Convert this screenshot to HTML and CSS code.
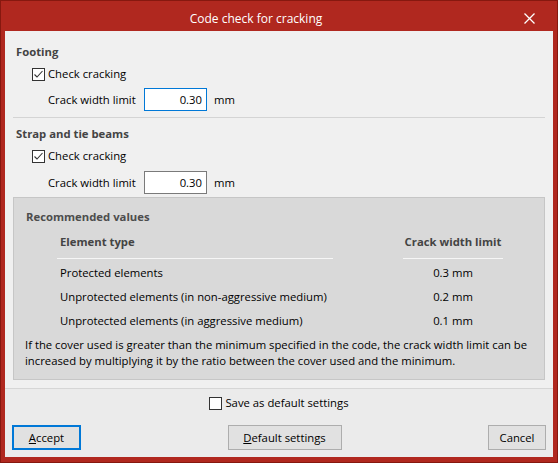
FILE: index.html
```html
<!DOCTYPE html>
<html>
<head>
<meta charset="utf-8">
<link rel="stylesheet" href="styles.css">
</head>
<body>
<div class="window">
  <div class="titlebar">
    <div class="title">Code check for cracking</div>
    <div class="close">
      <svg width="11" height="11" viewBox="0 0 11 11"><path d="M0.5 0.5 L10.5 10.5 M10.5 0.5 L0.5 10.5" stroke="#fff" stroke-width="1.3" fill="none"/></svg>
    </div>
  </div>
  <div class="body">
    <div class="main">
      <div class="group group-first">
        <div class="heading">Footing</div>
        <div class="check-row">
          <span class="box"><svg width="11" height="11" viewBox="0 0 11 11"><path d="M1.5 5.5 L4 8 L9.5 2" stroke="#333" stroke-width="1.1" fill="none"/></svg></span>
          <span>Check cracking</span>
        </div>
        <div class="limit-row">
          <span class="limit-label">Crack width limit</span>
          <span class="input input-focus">0.30</span>
          <span class="unit">mm</span>
        </div>
      </div>
      <div class="sep"></div>
      <div class="group group-second">
        <div class="heading">Strap and tie beams</div>
        <div class="check-row">
          <span class="box"><svg width="11" height="11" viewBox="0 0 11 11"><path d="M1.5 5.5 L4 8 L9.5 2" stroke="#333" stroke-width="1.1" fill="none"/></svg></span>
          <span>Check cracking</span>
        </div>
        <div class="limit-row">
          <span class="limit-label">Crack width limit</span>
          <span class="input">0.30</span>
          <span class="unit">mm</span>
        </div>
      </div>
      <div class="recommend">
        <div class="rec-title">Recommended values</div>
        <div class="rec-table">
          <div class="rec-head">
            <div class="col-type head-cell">Element type</div>
            <div class="col-limit head-cell">Crack width limit</div>
          </div>
          <div class="rec-row">
            <div class="col-type">Protected elements</div>
            <div class="col-limit">0.3 mm</div>
          </div>
          <div class="rec-row">
            <div class="col-type">Unprotected elements (in non-aggressive medium)</div>
            <div class="col-limit">0.2 mm</div>
          </div>
          <div class="rec-row">
            <div class="col-type">Unprotected elements (in aggressive medium)</div>
            <div class="col-limit">0.1 mm</div>
          </div>
        </div>
        <p class="note">If the cover used is greater than the minimum specified in the code, the crack width limit can be increased by multiplying it by the ratio between the cover used and the minimum.</p>
      </div>
    </div>
    <div class="footer">
      <div class="save-row">
        <span class="box"></span>
        <span>Save as default settings</span>
      </div>
      <div class="buttons">
        <button class="btn btn-accept"><u>A</u>ccept</button>
        <button class="btn btn-default"><u>D</u>efault settings</button>
        <button class="btn btn-cancel">Cancel</button>
      </div>
    </div>
  </div>
</div>
</body>
</html>
```
FILE: styles.css
```css
html, body {
  margin: 0;
  padding: 0;
}
body {
  width: 558px;
  height: 463px;
  overflow: hidden;
  font-family: "Open Sans", "Noto Sans", sans-serif;
  font-size: 11.3px;
  color: #000;
}
.window {
  box-sizing: border-box;
  width: 558px;
  height: 463px;
  background: #b0281f;
  border: 1px solid #86180f;
  padding: 0 4px 5px 4px;
  display: flex;
  flex-direction: column;
}
.titlebar {
  height: 30px;
  display: flex;
  align-items: center;
  margin: 0 -4px;
}
.title {
  flex: 1;
  text-align: center;
  color: #fff;
  font-size: 12px;
  padding-top: 5px;
  line-height: 16px;
}
.close {
  width: 36px;
  margin-right: 10px;
  padding-top: 5px;
  display: flex;
  justify-content: center;
}
.body {
  flex: 1;
  background: #f0f0f0;
  display: flex;
  flex-direction: column;
}
.main {
  padding: 0 8px;
}
.group {
  display: flex;
  flex-direction: column;
}
.group-first {
  padding-top: 13px;
}
.group-second {
  padding-top: 8px;
}
.heading {
  line-height: 16px;
  height: 16px;
  font-weight: 700;
  color: #444;
  padding-left: 3px;
}
.check-row {
  display: flex;
  align-items: center;
  height: 16px;
  line-height: 16px;
  margin-top: 6px;
  padding-left: 19px;
}
.box {
  box-sizing: border-box;
  width: 13px;
  height: 13px;
  border: 1px solid #333;
  background: #fff;
  display: inline-flex;
  align-items: center;
  justify-content: center;
  margin-right: 3px;
}
.limit-row {
  display: flex;
  align-items: center;
  margin-top: 6px;
  padding-left: 35px;
}
.group-second .limit-row {
  margin-top: 7px;
}
.limit-label {
  width: 96px;
}
.input {
  box-sizing: border-box;
  width: 63px;
  height: 23px;
  line-height: 21px;
  border: 1px solid #7a7a7a;
  background: #fff;
  text-align: right;
  padding-right: 4px;
}
.input-focus {
  border-color: #0078d7;
}
.unit {
  margin-left: 7px;
}
.sep {
  height: 1px;
  background: #d4d4d4;
  margin-top: 6px;
}
.recommend {
  margin-top: 3px;
  background: #d9d9d9;
  border: 1px solid #c6c6c6;
  padding: 11px 0 10px 11px;
}
.rec-title {
  line-height: 16px;
  font-weight: 700;
  color: #4d4d4d;
  padding-left: 1px;
}
.rec-table {
  margin-top: 9px;
  padding-left: 32px;
}
.rec-head {
  display: flex;
  margin-bottom: 2px;
}
.head-cell {
  font-weight: 700;
  color: #444;
  line-height: 16px;
  padding-bottom: 8px;
  border-bottom: 1px solid #f6f6f6;
}
.col-type {
  width: 276px;
  box-sizing: border-box;
  padding-left: 3px;
}
.col-limit {
  width: 100px;
  margin-left: 70px;
  text-align: center;
}
.rec-row {
  display: flex;
  height: 24px;
  line-height: 24px;
}
.note {
  margin: 4px 0 0 0;
  line-height: 16px;
  padding-right: 6px;
}
.footer {
  margin-top: 8px;
  border-top: 1px solid #d6d6d6;
  flex: 1;
  background: #ebebeb;
  display: flex;
  flex-direction: column;
}
.save-row {
  display: flex;
  justify-content: center;
  align-items: center;
  height: 16px;
  line-height: 16px;
  margin-top: 6px;
}
.buttons {
  display: flex;
  justify-content: space-between;
  margin-top: 14px;
  padding: 0 7px;
}
.btn {
  box-sizing: border-box;
  height: 25px;
  background: #e1e1e1;
  border: 1px solid #adadad;
  font-family: "Open Sans", "Noto Sans", sans-serif;
  font-size: 11.3px;
  color: #000;
  padding: 0;
  margin: 0;
}
.btn-accept {
  width: 69px;
  border: 2px solid #0078d7;
}
.btn-default {
  width: 114px;
}
.btn-cancel {
  width: 58px;
}
```
